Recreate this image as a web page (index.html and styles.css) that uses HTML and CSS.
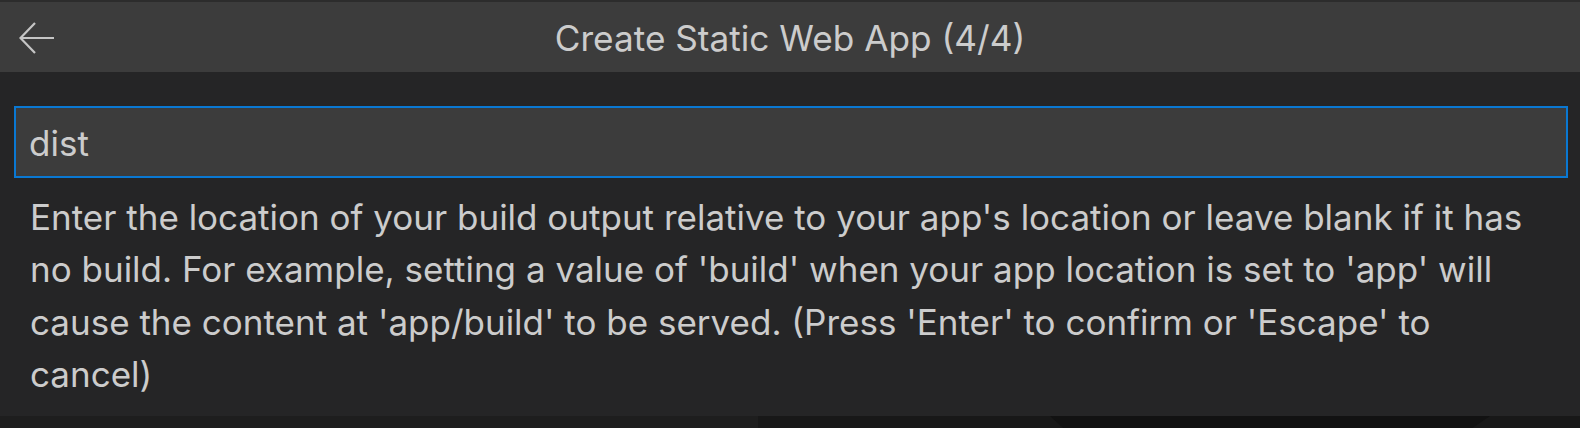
FILE: index.html
```html
<!DOCTYPE html>
<html>
<head>
<meta charset="utf-8">
<link rel="stylesheet" href="styles.css">
</head>
<body>
<div class="topline"></div>
<div class="header">
  <div class="back">
    <svg width="36" height="32" viewBox="0 0 36 32">
      <path d="M35 16H2M16 1L1.5 16L16 31" fill="none" stroke="#c5c5c5" stroke-width="2.2"/>
    </svg>
  </div>
  <div class="title">Create Static Web App (4/4)</div>
  <div></div>
</div>
<div class="content">
  <div class="input">dist</div>
  <div class="message">Enter the location of your build output relative to your app's location or leave blank if it has no build. For example, setting a value of 'build' when your app location is set to 'app' will cause the content at 'app/build' to be served. (Press 'Enter' to confirm or 'Escape' to cancel)</div>
</div>
<div class="bottom">
  <div class="b1"></div>
  <div class="b2"></div>
  <div class="b3"></div>
  <div class="b4"></div>
</div>
</body>
</html>
```
FILE: styles.css
```css
html, body {
  margin: 0;
  padding: 0;
}
body {
  width: 1580px;
  height: 428px;
  background: #252526;
  font-family: Inter, "Noto Sans", sans-serif;
  color: #cccccc;
  overflow: hidden;
  display: flex;
  flex-direction: column;
}
.topline {
  height: 2px;
  background: #2c2c2c;
}
.header {
  height: 70px;
  background: #3c3c3c;
  display: grid;
  grid-template-columns: 1fr auto 1fr;
  align-items: center;
}
.back {
  padding-left: 19px;
  display: flex;
  align-items: center;
  padding-top: 2px;
}
.title {
  font-size: 35.2px;
  color: #cccccc;
  padding-top: 2px;
}
.content {
  flex: 1;
  padding: 34px 12px 0 14px;
}
.input {
  box-sizing: border-box;
  height: 72px;
  border: 2px solid #0a78d2;
  background: #3c3c3c;
  padding-left: 13px;
  font-size: 35px;
  line-height: 70px;
  color: #cccccc;
}
.message {
  margin-top: 13px;
  padding-left: 16px;
  width: 1510px;
  font-size: 35px;
  line-height: 52.3px;
  color: #cccccc;
}
.bottom {
  height: 12px;
  display: flex;
  background: #181818;
}
.b1 { width: 758px; background: #1e1e1e; }
.b2 { width: 292px; background: #181818; }
.b3 { width: 440px; background: #121212; clip-path: polygon(0 0, 100% 0, 96% 100%, 3% 100%); }
.b4 { flex: 1; background: #181818; }
```
